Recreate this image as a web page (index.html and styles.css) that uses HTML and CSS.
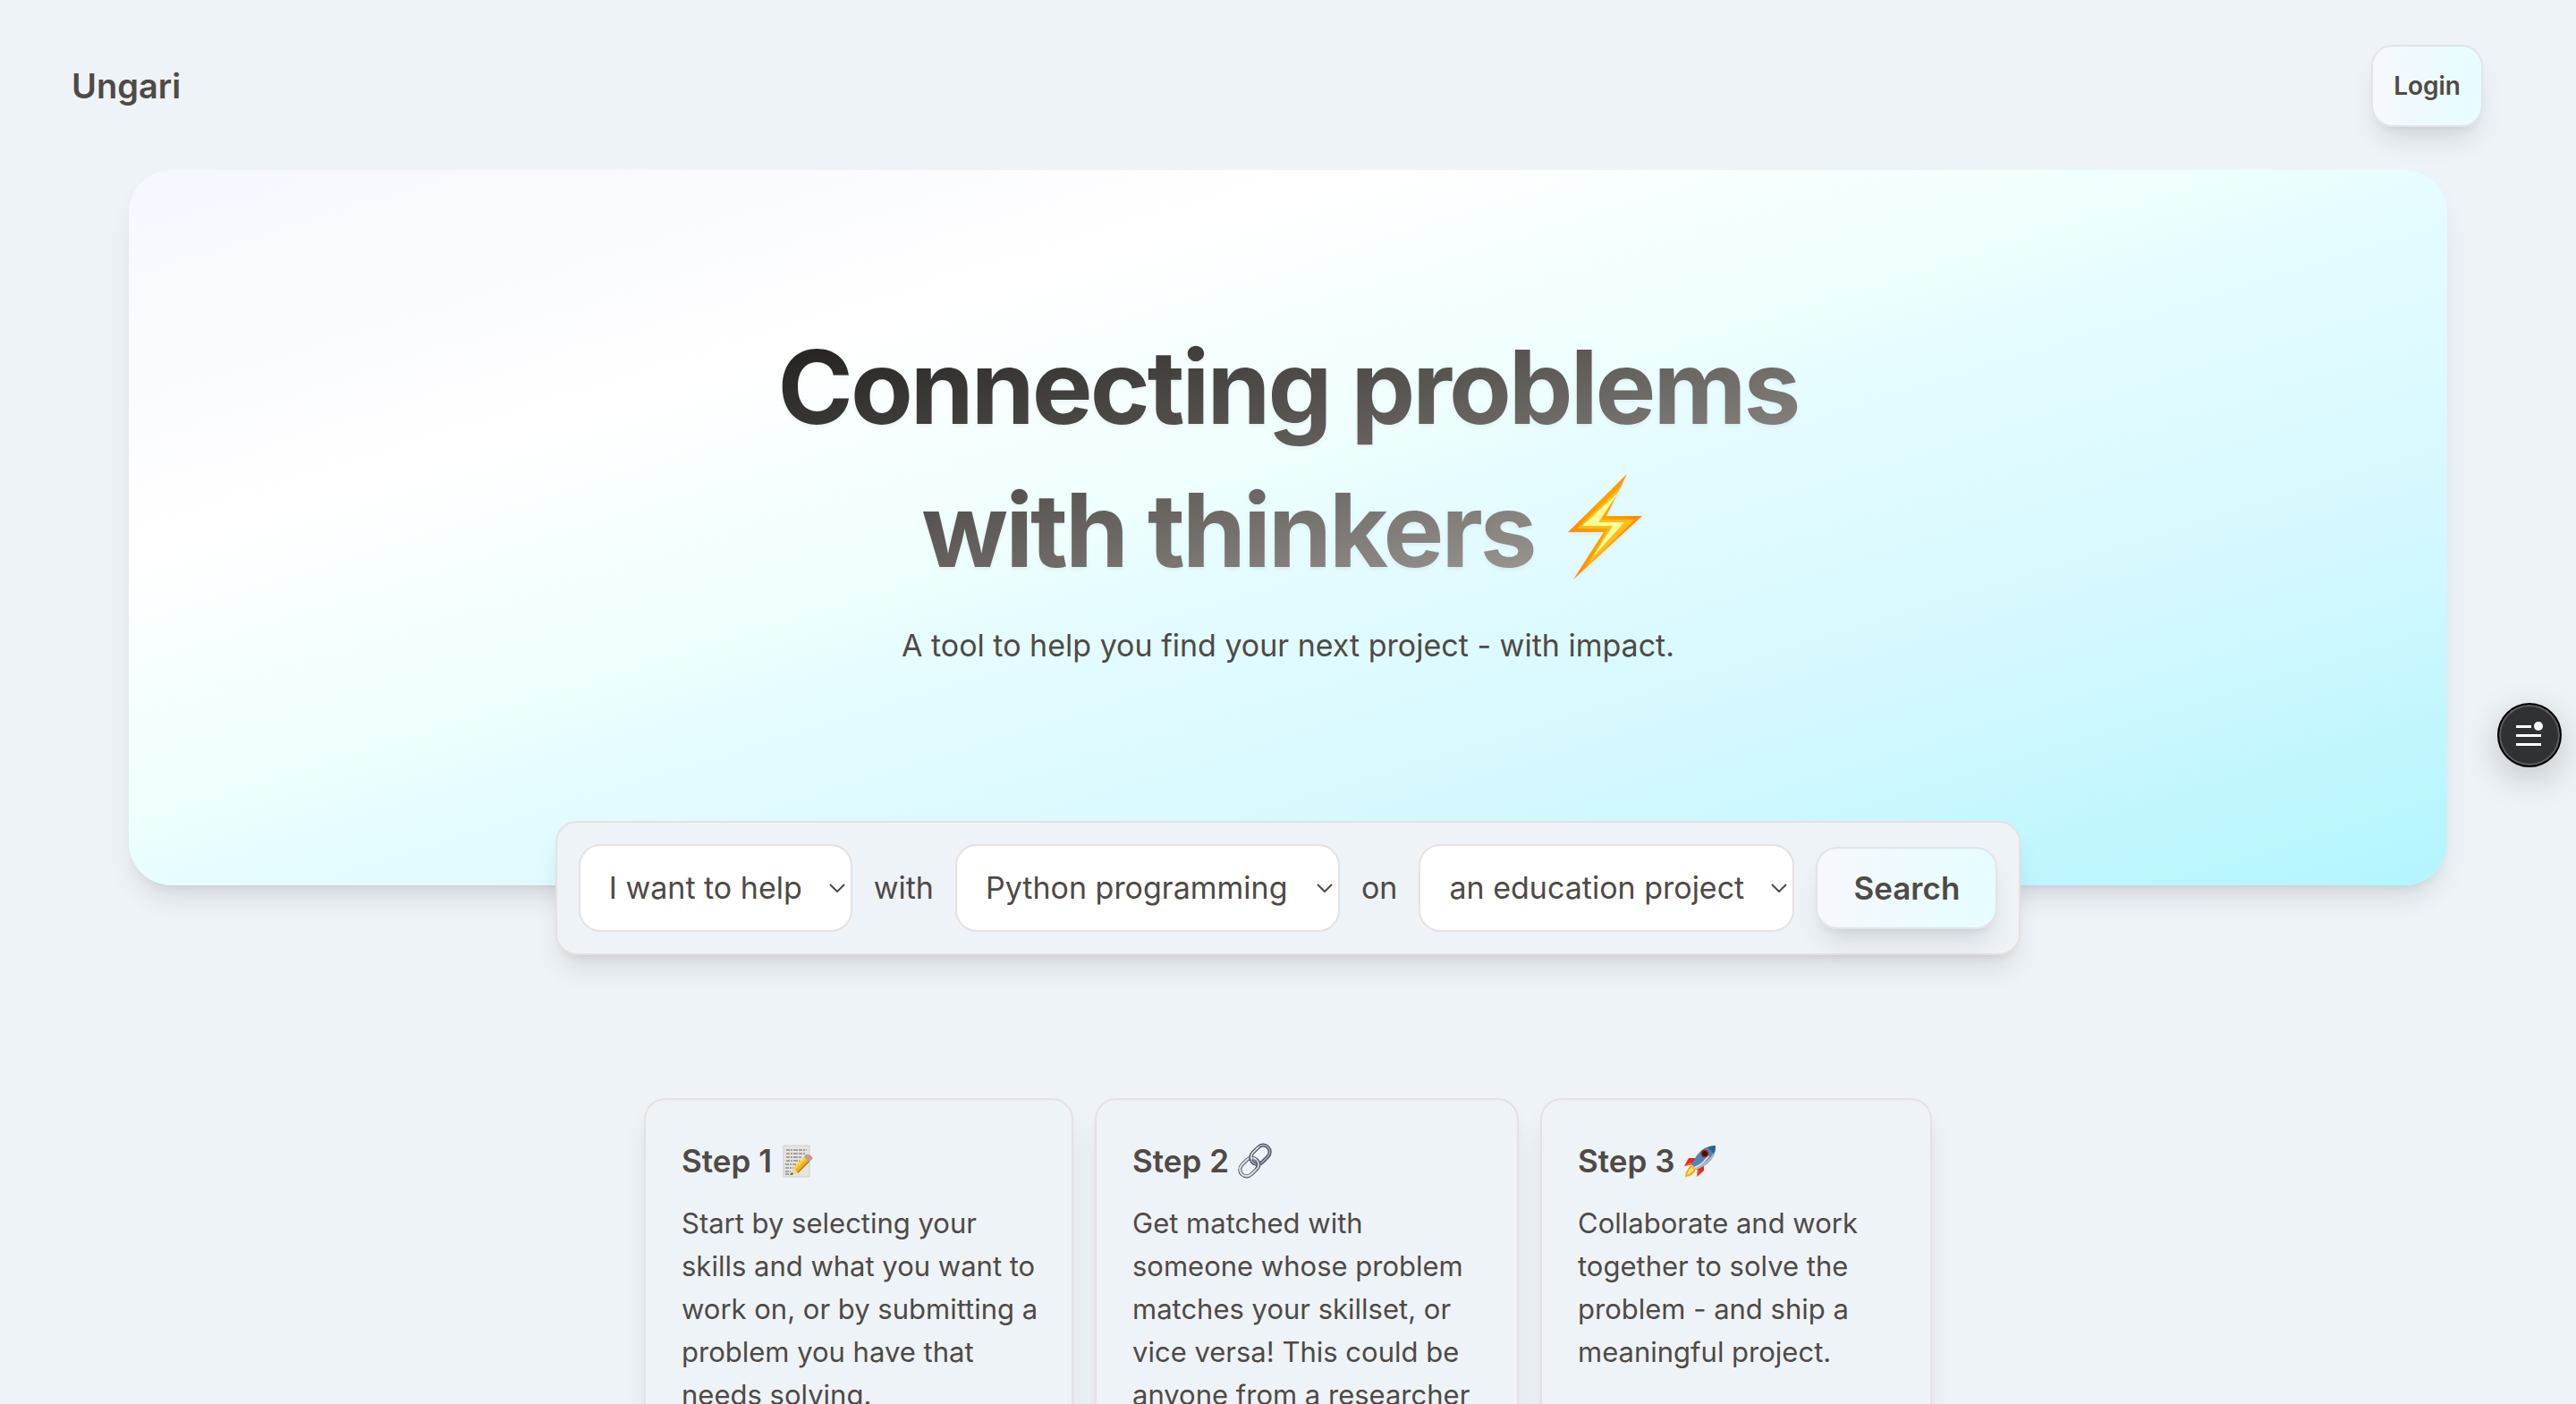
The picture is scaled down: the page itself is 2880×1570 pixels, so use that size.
FILE: index.html
```html
<!DOCTYPE html>
<html lang="en">
<head>
  <meta charset="utf-8">
  <meta name="viewport" content="width=device-width, initial-scale=1">
  <title>Ungari</title>
  <link rel="stylesheet" href="styles.css">
</head>
<body>
  <header class="topbar">
    <a class="brand" href="#">Ungari</a>
    <button class="button button-login" type="button">Login</button>
  </header>

  <main>
    <section class="hero">
      <h1 class="hero-title">
        <span class="hero-text">Connecting problems</span>
        <span class="hero-text">with thinkers
          <svg class="bolt" viewBox="0 0 84 118" role="img" aria-label="lightning">
            <defs>
              <linearGradient id="boltEdge" x1="0" y1="0" x2="1" y2="0">
                <stop offset="0" stop-color="#ff8a0c"/>
                <stop offset=".5" stop-color="#ffa400"/>
                <stop offset="1" stop-color="#ff8606"/>
              </linearGradient>
            </defs>
            <path fill="url(#boltEdge)" d="M67 0 44 47H84L7 118 41 65H1Z"/>
            <path fill="#ffbe14" d="M62 12 38 51H76L22 103 46 61H11Z"/>
            <path fill="#fffb9c" d="M58 20 35 54H64L28 94 51 58H17Z"/>
          </svg>
        </span>
      </h1>
      <p class="hero-lead">A tool to help you find your next project - with impact.</p>
    </section>

    <form class="finder">
      <div class="picker picker-role">
        <select aria-label="What you want to do">
          <option>I want to help</option>
          <option>I need help</option>
        </select>
        <svg class="chevron" viewBox="0 0 18 10" aria-hidden="true"><path d="M1 1 9 9 17 1"/></svg>
      </div>
      <label for="skill">with</label>
      <div class="picker picker-skill">
        <select id="skill">
          <option>Python programming</option>
          <option>Design</option>
        </select>
        <svg class="chevron" viewBox="0 0 18 10" aria-hidden="true"><path d="M1 1 9 9 17 1"/></svg>
      </div>
      <label for="topic">on</label>
      <div class="picker picker-topic">
        <select id="topic">
          <option>an education project</option>
          <option>a health project</option>
        </select>
        <svg class="chevron" viewBox="0 0 18 10" aria-hidden="true"><path d="M1 1 9 9 17 1"/></svg>
      </div>
      <button class="button button-search" type="submit">Search</button>
    </form>

    <section class="steps">
      <article class="step">
        <h2>Step 1
          <svg class="emoji" viewBox="0 0 40 40" role="img" aria-label="memo">
            <path fill="#e4e4e2" stroke="#cfcfcd" stroke-width="1" d="M4 3H33V38H4Z"/>
            <path fill="none" stroke="#5d5d5d" stroke-width="1.2" stroke-dasharray="4 1 2 1 5 1" d="M7 8H30M7 12H28M7 16H24M7 20H22M6 24H18M6 28H15M6 32H12M6 35H12"/>
            <path fill="#f0b21a" d="M15 28 28 15 33 21 20 34Z"/>
            <path fill="#ffd23c" d="M15 28 28 15 30 17 17 30Z"/>
            <path fill="#b97508" d="M19 33 32 20 33 21 20 34Z"/>
            <path fill="#eed7a5" d="M15 28 20 34 12 36Z"/>
            <path fill="#3c3530" d="M13 33 15 35 12 36Z"/>
            <path fill="#9ea8ac" d="M27 16 29 13 35 19 33 21Z"/>
            <path fill="#ee7d83" d="M29 13Q32 12 35 15T35 19Z"/>
          </svg>
        </h2>
        <p>Start by selecting your<br>skills and what you want to<br>work on, or by submitting a<br>problem you have that<br>needs solving.</p>
      </article>
      <article class="step">
        <h2>Step 2
          <svg class="emoji" viewBox="0 0 40 40" role="img" aria-label="link">
            <g fill="none" transform="rotate(-45 20 20)">
              <rect x="-1" y="13" width="23" height="15" rx="7.5" stroke="#4b4246" stroke-width="4"/>
              <rect x="-1" y="13" width="23" height="15" rx="7.5" stroke="#a9bdd3" stroke-width="2.6"/>
              <rect x="-1" y="12.6" width="23" height="15" rx="7.5" stroke="#edf3f8" stroke-width="1"/>
              <rect x="17" y="12" width="24" height="15" rx="7.5" stroke="#48363a" stroke-width="4"/>
              <rect x="17" y="12" width="24" height="15" rx="7.5" stroke="#8fa9c6" stroke-width="2"/>
              <path d="M19 17Q20 12 25 12H34" stroke="#e4edf6" stroke-width="1.3"/>
              <path d="M14 28Q22 28 22 20.5" stroke="#4b4246" stroke-width="4"/>
              <path d="M14 28Q22 28 22 20.5" stroke="#c3d1df" stroke-width="2.2"/>
            </g>
          </svg>
        </h2>
        <p>Get matched with<br>someone whose problem<br>matches your skillset, or<br>vice versa! This could be<br>anyone from a researcher<br>to a local charity.</p>
      </article>
      <article class="step">
        <h2>Step 3
          <svg class="emoji" viewBox="0 0 40 40" role="img" aria-label="rocket">
            <path fill="#e8281b" d="M15 17 7 17 2 26 12 24ZM24 26 24 31 16 38 17 28Z"/>
            <path fill="#ff7a2a" d="M2 26 9 22 12 24ZM16 38 16 32 19 30Z"/>
            <path fill="#f7a31b" d="M10 25Q4 29 3 38 12 37 15 30Z"/>
            <path fill="#ffec64" d="M10 27Q6 31 5 36 10 34 13 30Z"/>
            <path fill="#4f86b4" d="M37 3Q24 3 16 14L10 24 16 30 27 24Q38 15 37 3Z"/>
            <path fill="#a9b8c2" d="M36 9Q35 18 27 24L16 30 13 27Q30 22 36 9Z"/>
            <path fill="#dfe5e8" d="M30 15Q26 22 15 28L13 27Q25 22 28 13Z"/>
            <path fill="#2d6297" d="M37 3Q32 3 28 5L35 12Q37 8 37 3Z"/>
            <circle cx="25" cy="12" r="4.5" fill="#c51f1d"/>
            <circle cx="25" cy="12" r="3" fill="#271b20"/>
          </svg>
        </h2>
        <p>Collaborate and work<br>together to solve the<br>problem - and ship a<br>meaningful project.</p>
      </article>
    </section>
  </main>

  <button class="menu-fab" type="button" aria-label="Open menu">
    <svg viewBox="0 0 32 28" aria-hidden="true">
      <path fill="#fff" d="M1 5H18V8H1ZM1 15H29V18H1ZM1 25H29V28H1Z"/>
      <circle cx="26" cy="6" r="5" fill="#fff"/>
    </svg>
  </button>
</body>
</html>
```
FILE: styles.css
```css
:root {
  --page: #eef3f8;
  --ink: #4f4a45;
  --line: #e5e1e0;
  --shadow: 0 20px 30px -6px rgb(0 0 0 / 10%), 0 8px 12px -8px rgb(0 0 0 / 10%);
  scrollbar-width: none;
}

* {
  box-sizing: border-box;
}

body {
  margin: 0;
  background: var(--page);
  color: var(--ink);
  font-family: Inter, "Liberation Sans", sans-serif;
  font-size: 31px;
  line-height: 48px;
}

h1,
h2,
p {
  margin: 0;
}

.topbar {
  display: flex;
  align-items: center;
  justify-content: space-between;
  padding: 50px 104px 48px 80px;
}

.brand {
  color: inherit;
  font-size: 38px;
  font-weight: 600;
  text-decoration: none;
}

.button {
  height: 92px;
  border: 2px solid #e1e5ea;
  border-radius: 24px;
  background: linear-gradient(to right, #f6f8fd, #e6fdff);
  box-shadow: var(--shadow);
  color: inherit;
  font-family: inherit;
  font-weight: 600;
}

.button-login {
  padding: 0 23px;
  font-size: 28px;
}

.button-search {
  padding: 0 40px;
  font-size: 35px;
}

.hero {
  height: 800px;
  margin: 0 5%;
  padding-top: 163px;
  border-radius: 48px;
  background: linear-gradient(to bottom right, #f5f7ff, #fff 27%, #edfffd 46%, #e6fcff 51%, #d3f8fe 75%, #b3f5ff);
  box-shadow: var(--shadow);
  text-align: center;
}

.hero-title {
  width: fit-content;
  margin: 0 auto;
  background: linear-gradient(to bottom right, #1c1b1a, #5a5754 45%, #a8a29e 90%);
  background-clip: text;
  color: transparent;
  filter: drop-shadow(0 2px 2px rgb(0 0 0 / 6%));
  font-size: 114px;
  font-weight: 700;
  letter-spacing: -3px;
  line-height: 160px;
}

.hero-text {
  display: block;
}

.bolt {
  width: 84px;
  height: 118px;
  margin: 0 14px 0 12px;
  vertical-align: -14px;
}

.hero-lead {
  margin-top: 21px;
  font-size: 34px;
  line-height: 56px;
}

.finder {
  display: flex;
  align-items: center;
  gap: 24px;
  width: fit-content;
  margin: -72px auto 0;
  padding: 24px;
  border: 2px solid var(--line);
  border-radius: 24px;
  background: var(--page);
  box-shadow: var(--shadow);
  font-size: 34px;
}

.picker {
  position: relative;
}

.picker select {
  width: 100%;
  height: 98px;
  padding: 0 32px;
  border: 2px solid var(--line);
  border-radius: 24px;
  appearance: none;
  background: #fff;
  color: inherit;
  font: inherit;
}

.picker-role {
  width: 306px;
}

.picker-skill {
  width: 430px;
}

.picker-topic {
  width: 420px;
}

.chevron {
  position: absolute;
  top: 44px;
  right: 8px;
  width: 18px;
  height: 10px;
  fill: none;
  stroke: var(--ink);
  stroke-width: 2;
  pointer-events: none;
}

.steps {
  display: grid;
  grid-template-columns: minmax(0, 480fr) minmax(0, 474fr) minmax(0, 438fr);
  gap: 24px;
  width: 50%;
  margin: 160px auto 0;
}

.step {
  padding: 40px;
  border: 2px solid var(--line);
  border-radius: 24px;
  box-shadow: var(--shadow);
  white-space: nowrap;
}

.step h2 {
  margin-bottom: 18px;
  font-size: 35px;
  font-weight: 600;
  line-height: 56px;
}

.emoji {
  width: 40px;
  height: 40px;
  vertical-align: -7px;
}

.menu-fab {
  position: fixed;
  top: 786px;
  right: 16px;
  display: grid;
  place-items: center;
  width: 72px;
  height: 72px;
  padding: 0 0 4px;
  border: 2px solid #000;
  border-radius: 50%;
  background: #303134;
  box-shadow: inset 0 0 0 2px #5c5d60, 0 12px 40px rgb(0 0 0 / 20%);
}

.menu-fab svg {
  width: 32px;
  height: 28px;
}
```
